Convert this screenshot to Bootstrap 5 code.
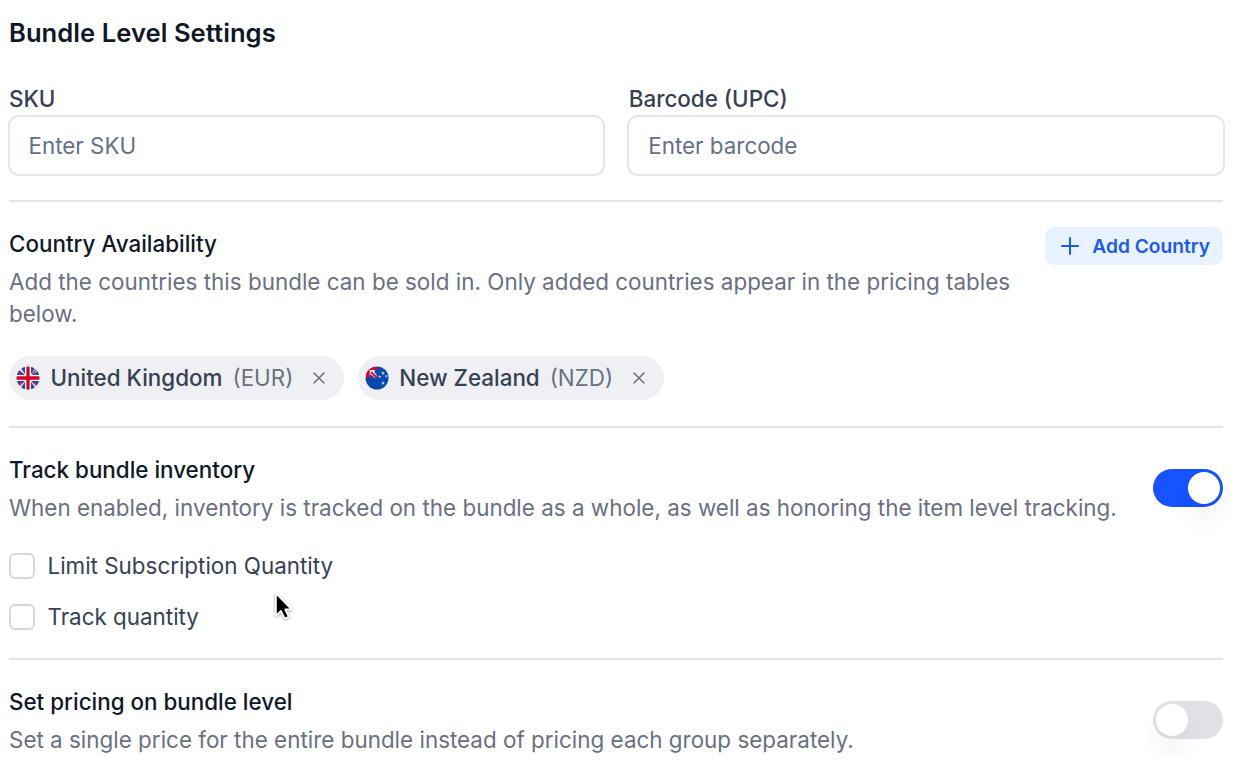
<!DOCTYPE html>
<html lang="en">
<head>
<meta charset="utf-8">
<meta name="viewport" content="width=device-width, initial-scale=1">
<title>Bundle Level Settings</title>
<link href="https://cdn.jsdelivr.net/npm/bootstrap@5.3.0/dist/css/bootstrap.min.css" rel="stylesheet">
<style>
body{font-family:Inter,"Liberation Sans",sans-serif;font-size:22.4px;line-height:32px;color:#364153;background:#fff;overflow:hidden}
.settings{padding:14px 13px 0 9px}
.page-title{font-size:25.6px;line-height:38px;font-weight:600;color:#101828;margin:0 0 31px;letter-spacing:.04px}
.fields{display:grid;grid-template-columns:1fr 1fr;column-gap:22px;margin:0 -2px 0 -1.5px}
.fields label{font-weight:500;padding-left:1.5px;display:block}
.fields .form-control{height:61px;border:2px solid #e6e6eb;border-radius:11px;font-size:22.4px;padding:0 19px;color:#364153}
.fields .form-control::placeholder{color:#667085;opacity:1}
.panel{border-top:2px solid #e4e5eb}
.panel-country{margin-top:24px;padding-top:26px;height:226px}
.panel-inventory{padding-top:26px;height:232px}
.panel-pricing{padding-top:26px}
.panel h2{font-size:22.4px;line-height:32px;font-weight:500;color:#101828;margin:0 0 6px}
.panel p{color:#6a7080;margin:0;letter-spacing:.017px}
.btn-add{background:#e9f3ff;color:#1d58f0;border:0;border-radius:9px;height:38px;width:178px;font-size:19.2px;font-weight:600;padding:0 13px 0 16px;margin-top:-1px}
.chips{gap:14px;margin-top:26px}
.chip{background:#eff0f4;border-radius:22px;height:44px;padding:0 17px 0 7px;font-weight:500}
.chip .cur{font-weight:400;color:#6a7080;margin-left:10px}
.chip .name{margin-left:10.5px}
.chip .btn-x{border:0;background:none;padding:0;margin-left:17.5px;line-height:0}
.check-row{gap:12.5px;margin-top:26px}
.check-row + .check-row{margin-top:19px}
.form-check-input.tick{width:26px;height:26px;border:2px solid #d5d8df;border-radius:6px;margin:-1px 0 0;float:none}
.toggle{width:70px;height:38px;border-radius:19px;padding:3px;background:#e0e1e7;display:flex;flex:none;margin-top:15px}
.toggle.on{background:#1554ff;justify-content:flex-end}
.toggle span{width:32px;height:32px;border-radius:50%;background:#fff;box-shadow:0 16px 24px -2px rgba(0,0,0,.07)}
.pointer{position:absolute;left:271px;top:590px;filter:drop-shadow(0 1px 1.5px rgba(0,0,0,.35))}
</style>
</head>
<body>
<main class="settings">
  <h1 class="page-title">Bundle Level Settings</h1>
  <div class="fields">
    <div><label for="sku">SKU</label><input id="sku" class="form-control" placeholder="Enter SKU"></div>
    <div><label for="upc">Barcode (UPC)</label><input id="upc" class="form-control" placeholder="Enter barcode"></div>
  </div>

  <section class="panel panel-country">
    <div class="d-flex justify-content-between align-items-start">
      <div><h2>Country Availability</h2>
      <p>Add the countries this bundle can be sold in. Only added countries appear in the pricing tables<br>below.</p></div>
      <button class="btn btn-add d-flex align-items-center justify-content-between flex-shrink-0">
        <svg width="18" height="18" viewBox="0 0 18 18" fill="none" stroke="currentColor" stroke-width="2" stroke-linecap="round"><path d="M9 1v16M1 9h16"/></svg>
        <span>Add Country</span>
      </button>
    </div>
    <div class="chips d-flex">
      <div class="chip d-inline-flex align-items-center">
        <svg width="24" height="24" viewBox="0 0 24 24"><defs><clipPath id="disc"><circle cx="12" cy="12" r="11.5"/></clipPath></defs>
          <g clip-path="url(#disc)"><path fill="#f2f2f7" d="M0 0h24v24H0z"/><path fill="#1650b5" d="M4 1l5 7V1zM1 4l7 5H1zM15 1v7l5-7zM23 4l-7 5h7zM9 23v-7l-5 7zM1 20l7-5H1zM15 16v7h5zM16 15l7 5v-5z"/><path stroke="#d80027" stroke-width="1.3" d="M2 4l6 5M22 2l-6 6M22 21l-6-6M2 21l6-6"/><path stroke="#fff" stroke-width="5" d="M12 0v24M0 12h24"/><path stroke="#d80027" stroke-width="3.3" d="M12 0v24M0 12h24"/></g></svg>
        <span class="name">United Kingdom</span><span class="cur">(EUR)</span>
        <button class="btn-x" aria-label="Remove United Kingdom"><svg width="16" height="16" viewBox="0 0 16 16" stroke="#6a7282" stroke-width="1.6" stroke-linecap="round"><path d="M3 3l10 10M13 3L3 13"/></svg></button>
      </div>
      <div class="chip d-inline-flex align-items-center">
        <svg width="24" height="24" viewBox="0 0 24 24"><g clip-path="url(#disc)"><path fill="#0749ad" d="M0 0h24v24H0z"/><path fill="#f2f2f7" d="M0 0h12v3.5L9 5l3 5v2h-2L5 8l-1 4H0z"/><path stroke="#d80027" stroke-width="1.8" d="M6 6l6 6"/><path fill="#d80027" d="M1 1h11v3H4.6v8H1z"/><path fill="#b9c4e4" d="M18 5l.6 1.3 1.4.1-1.1 1 .4 1.3-1.3-.8-1.2.8.3-1.3-1-1 1.4-.1zM14.7 9l.5 1.1 1.2.1-.9.8.3 1.1-1.1-.6-1 .6.3-1.1-.9-.8 1.2-.1zM21.2 8.5l.5 1.1 1.2.1-.9.8.3 1.1-1.1-.6-1 .6.3-1.1-.9-.8 1.2-.1zM18 15l.6 1.3 1.4.1-1.1 1 .4 1.3-1.3-.8-1.2.8.3-1.3-1-1 1.4-.1z"/></g></svg>
        <span class="name">New Zealand</span><span class="cur">(NZD)</span>
        <button class="btn-x" aria-label="Remove New Zealand"><svg width="16" height="16" viewBox="0 0 16 16" stroke="#6a7282" stroke-width="1.6" stroke-linecap="round"><path d="M3 3l10 10M13 3L3 13"/></svg></button>
      </div>
    </div>
  </section>

  <section class="panel panel-inventory">
    <div class="d-flex justify-content-between align-items-start">
      <div><h2>Track bundle inventory</h2>
      <p>When enabled, inventory is tracked on the bundle as a whole, as well as honoring the item level tracking.</p></div>
      <div class="toggle on" role="switch" aria-checked="true"><span></span></div>
    </div>
    <div class="check-row d-flex align-items-center"><input class="form-check-input tick" type="checkbox" id="limit"><label for="limit">Limit Subscription Quantity</label></div>
    <div class="check-row d-flex align-items-center"><input class="form-check-input tick" type="checkbox" id="track"><label for="track">Track quantity</label></div>
  </section>

  <section class="panel panel-pricing">
    <div class="d-flex justify-content-between align-items-start">
      <div><h2>Set pricing on bundle level</h2>
      <p>Set a single price for the entire bundle instead of pricing each group separately.</p></div>
      <div class="toggle" role="switch" aria-checked="false"><span></span></div>
    </div>
  </section>
</main>
<svg class="pointer" width="24" height="34" viewBox="0 0 24 34"><path d="M5 3.5v22l5-4.7 3.7 7.7 4-1.9-3.6-7.2h6.4z" fill="#000" stroke="#fff" stroke-width="1.6" stroke-linejoin="round"/></svg>
<script src="https://cdn.jsdelivr.net/npm/bootstrap@5.3.0/dist/js/bootstrap.bundle.min.js"></script>
</body>
</html>
